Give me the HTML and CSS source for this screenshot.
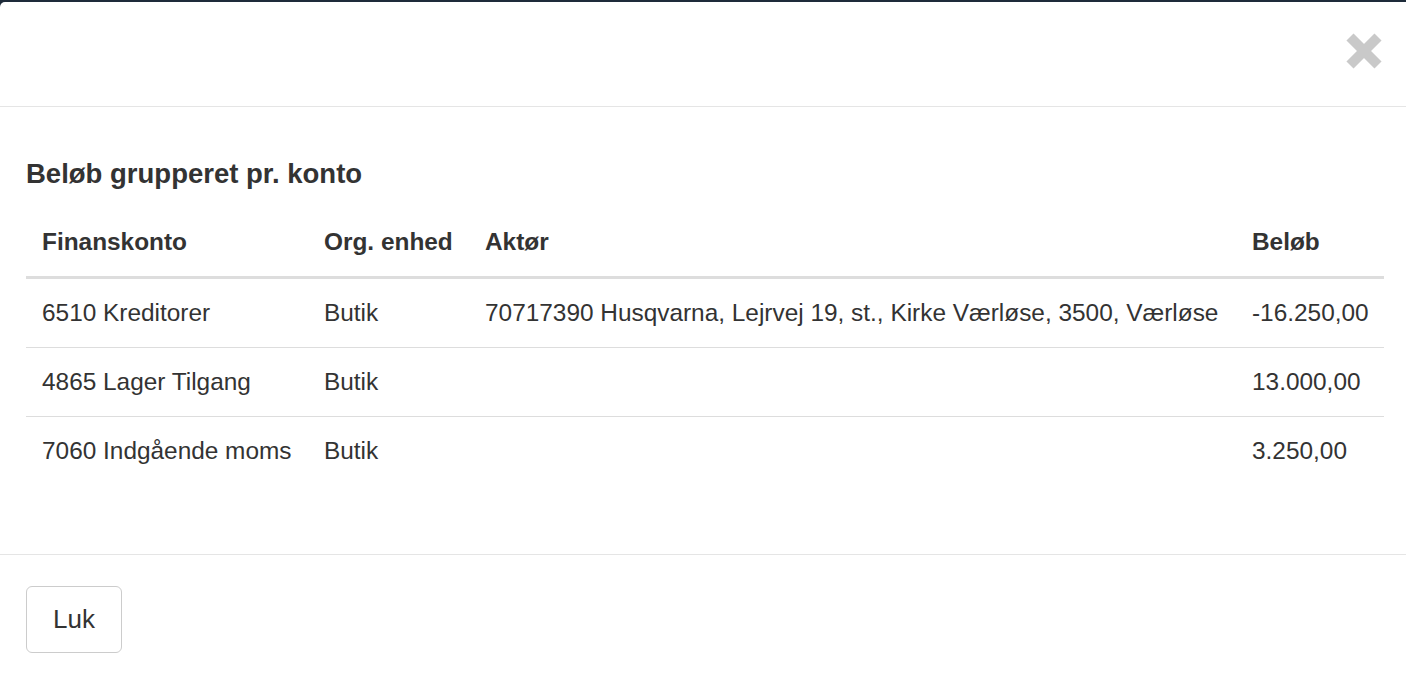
FILE: index.html
```html
<!DOCTYPE html>
<html lang="da">
<head>
    <meta charset="UTF-8">
    <meta name="viewport" content="width=device-width, initial-scale=1.0">
    <title>Beløb grupperet pr. konto</title>
    <link rel="stylesheet" href="styles.css">
</head>
<body>
    <div class="modal">
        <div class="modal-header">
            <button class="close" type="button" aria-label="Luk">
                <svg width="36" height="36" viewBox="0 0 36 36">
                    <line x1="4" y1="4" x2="32" y2="32" stroke="#c9c9c9" stroke-width="10"/>
                    <line x1="32" y1="4" x2="4" y2="32" stroke="#c9c9c9" stroke-width="10"/>
                </svg>
            </button>
        </div>
        <div class="modal-body">
            <h4 class="title">Beløb grupperet pr. konto</h4>
            <table class="accounts">
                <thead>
                    <tr>
                        <th class="col-account">Finanskonto</th>
                        <th class="col-org">Org. enhed</th>
                        <th class="col-actor">Aktør</th>
                        <th class="col-amount">Beløb</th>
                    </tr>
                </thead>
                <tbody>
                    <tr>
                        <td>6510 Kreditorer</td>
                        <td>Butik</td>
                        <td>70717390 Husqvarna, Lejrvej 19, st., Kirke Værløse, 3500, Værløse</td>
                        <td>-16.250,00</td>
                    </tr>
                    <tr>
                        <td>4865 Lager Tilgang</td>
                        <td>Butik</td>
                        <td></td>
                        <td>13.000,00</td>
                    </tr>
                    <tr>
                        <td>7060 Indgående moms</td>
                        <td>Butik</td>
                        <td></td>
                        <td>3.250,00</td>
                    </tr>
                </tbody>
            </table>
        </div>
        <div class="modal-footer">
            <button class="btn" type="button">Luk</button>
        </div>
    </div>
</body>
</html>
```

FILE: styles.css
```css
body {
    margin: 0;
    background: #1e2b3a;
    font-family: "Liberation Sans", Arial, sans-serif;
    color: #333;
}
.modal {
    margin-top: 2px;
    height: 676px;
    background: #fff;
    border-top-left-radius: 5px;
    overflow: hidden;
}
.modal-header {
    height: 104px;
    border-bottom: 1px solid #e5e5e5;
    display: flex;
    justify-content: flex-end;
    align-items: flex-start;
    padding-right: 24px;
}
.close {
    margin-top: 31px;
    padding: 0;
    border: 0;
    background: none;
    cursor: pointer;
    line-height: 0;
}
.modal-body {
    padding: 52px 22px 36px 26px;
}
.title {
    margin: 0 0 19px;
    font-size: 27.5px;
    line-height: 30px;
    font-weight: bold;
}
.accounts {
    width: 1358px;
    border-collapse: collapse;
    table-layout: fixed;
    font-size: 24.4px;
    line-height: 36px;
    margin-bottom: 33px;
}
.accounts th,
.accounts td {
    padding: 16px;
    text-align: left;
    white-space: nowrap;
}
.accounts th {
    font-weight: bold;
    border-bottom: 3px solid #ddd;
}
.accounts tbody tr + tr td {
    border-top: 1px solid #ddd;
}
.col-account { width: 250px; }
.col-org { width: 129px; }
.col-actor { width: 735px; }
.col-amount { width: 116px; }
.modal-footer {
    border-top: 1px solid #e5e5e5;
    padding: 31px 26px;
}
.btn {
    font-family: "Liberation Sans", Arial, sans-serif;
    font-size: 26px;
    line-height: 37px;
    color: #333;
    background: #fff;
    border: 1px solid #ccc;
    border-radius: 6px;
    padding: 14px 26px;
    cursor: pointer;
}
```
